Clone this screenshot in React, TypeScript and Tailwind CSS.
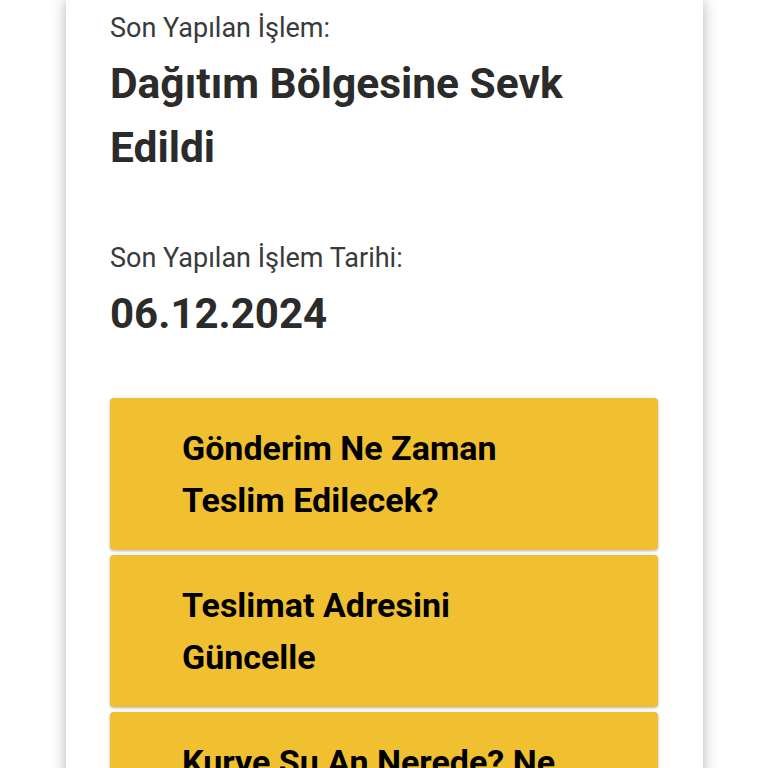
import React from 'react';

const actions = [
  'Gönderim Ne Zaman Teslim Edilecek?',
  'Teslimat Adresini Güncelle',
  'Kurye Şu An Nerede? Ne Zaman Gelecek?',
];

export default function App() {
  return (
    <div className="h-[768px] overflow-hidden bg-white font-['Roboto',sans-serif]">
      <div className="ml-[66px] w-[637px] min-h-[800px] bg-white shadow-[0_0_14px_rgba(0,0,0,0.3)] px-[44px] pt-[12px]">
        <p className="text-[27px] leading-[32px] text-[#3a3a3a]">Son Yapılan İşlem:</p>
        <h2 className="mt-[8px] text-[42.5px] leading-[64px] font-bold text-[#2b2b2b] w-[480px]">
          Dağıtım Bölgesine Sevk Edildi
        </h2>
        <p className="mt-[62px] text-[27px] leading-[32px] text-[#3a3a3a]">Son Yapılan İşlem Tarihi:</p>
        <p className="mt-[14px] text-[42px] leading-[52px] font-bold text-[#2b2b2b]">06.12.2024</p>
        <div className="mt-[58px] flex flex-col gap-[5px] w-[548px]">
          {actions.map((a) => (
            <button
              key={a}
              className="h-[152px] rounded-[4px] bg-[#f0c031] shadow-[0_1px_3px_rgba(0,0,0,0.3)] text-left pl-[72px] pr-[86px] flex items-center"
            >
              <span className="text-[34px] leading-[52px] font-bold text-black">{a}</span>
            </button>
          ))}
        </div>
      </div>
    </div>
  );
}
